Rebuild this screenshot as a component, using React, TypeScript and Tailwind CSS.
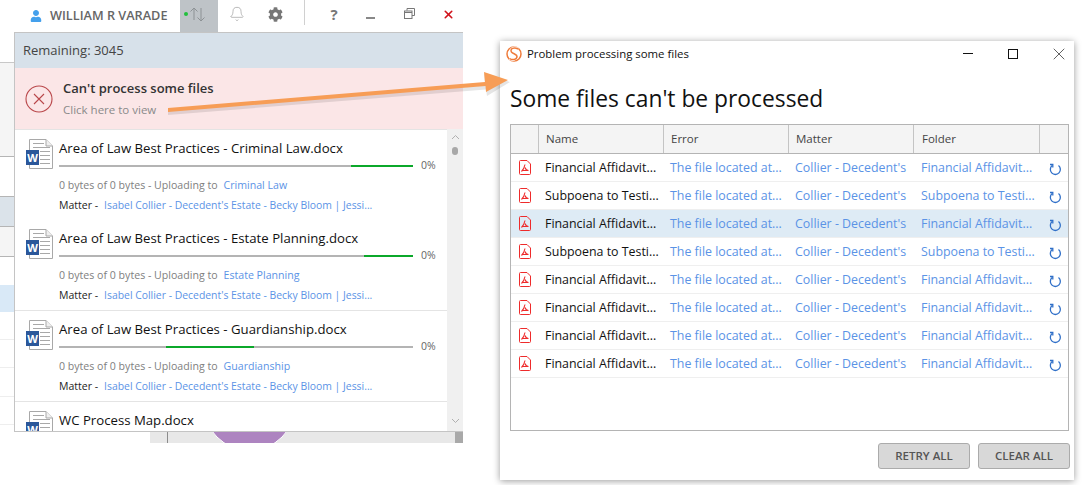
import React from "react";
import { Bell, X } from "lucide-react";
import { FaCog, FaUser } from "react-icons/fa";

const backdropRows = [
  { height: "h-[23px]", className: "bg-white border-b border-[#c8c8c8]" },
  { height: "h-[94px]", className: "bg-[#f5f5f5] border-b border-[#b5b5b5]" },
  { height: "h-[40px]", className: "bg-white border-b border-[#b5b5b5]" },
  { height: "h-[30px]", className: "bg-[#dbe3ea] border-b border-[#b5b5b5]" },
  { height: "h-[30px]", className: "bg-[#f5f5f5] border-b border-[#b5b5b5]" },
  { height: "h-[28px]", className: "bg-white" },
  { height: "h-[27px]", className: "bg-[#d9e9f7]" },
  { height: "h-[28px]", className: "bg-white border-b border-[#eeeeee]" },
  { height: "h-[28px]", className: "bg-white border-b border-[#eeeeee]" },
  { height: "h-[29px]", className: "bg-white border-b border-[#eeeeee]" },
  { height: "h-[28px]", className: "bg-white border-b border-[#eeeeee]" },
];

const uploads = [
  { name: "Area of Law Best Practices - Criminal Law.docx", folder: "Criminal Law", before: "w-[292px]", bar: "w-[62px]", height: "h-[90px]", border: "" },
  { name: "Area of Law Best Practices - Estate Planning.docx", folder: "Estate Planning", before: "w-[305px]", bar: "w-[49px]", height: "h-[91px]", border: "border-b border-[#e4e4e4]" },
  { name: "Area of Law Best Practices - Guardianship.docx", folder: "Guardianship", before: "w-[107px]", bar: "w-[88px]", height: "h-[91px]", border: "border-b border-[#e4e4e4]" },
];

const problemRows = [
  { name: "Financial Affidavit...", folder: "Financial Affidavit...", selected: false },
  { name: "Subpoena to Testi...", folder: "Subpoena to Testi...", selected: false },
  { name: "Financial Affidavit...", folder: "Financial Affidavit...", selected: true },
  { name: "Subpoena to Testi...", folder: "Subpoena to Testi...", selected: false },
  { name: "Financial Affidavit...", folder: "Financial Affidavit...", selected: false },
  { name: "Financial Affidavit...", folder: "Financial Affidavit...", selected: false },
  { name: "Financial Affidavit...", folder: "Financial Affidavit...", selected: false },
  { name: "Financial Affidavit...", folder: "Financial Affidavit...", selected: false },
];

const WordIcon: React.FC = () => (
  <div className="relative w-[27px] h-[30px] shrink-0">
    <svg width="27" height="30" viewBox="0 0 27 30" className="absolute left-0 top-0">
      <path d="M3.5 .5H20L26.5 7V29.5H3.5Z" fill="#fff" stroke="#a8a8a8" />
      <path d="M20 .5V7H26.5" fill="#f0f0f0" stroke="#a8a8a8" />
      <path d="M7 4.5H18M7 8.5H24M14 12.5H24M14 16.5H24M14 20.5H24M14 24.5H24" stroke="#a8a8a8" />
    </svg>
    <div className="absolute left-0 top-[11px] w-[13px] h-[15px] bg-[#2b579a] flex items-center justify-center text-white text-[11px] font-bold leading-none">
      W
    </div>
  </div>
);

const PdfIcon: React.FC = () => (
  <svg width="12" height="15" viewBox="0 0 12 15" fill="none" stroke="#ee2b2b">
    <path d="M1.5 .5H8L11.5 4V13.5A1 1 0 0 1 10.5 14.5H1.5A1 1 0 0 1 .5 13.5V1.5A1 1 0 0 1 1.5 .5Z" />
    <path d="M6 4.5C5.5 7 4.5 9.5 2.5 11.5M6 7.5C6.5 9 8 10.5 9.5 10.5M3.5 10.5H8.5" strokeWidth="1.1" />
  </svg>
);

const RefreshIcon: React.FC = () => (
  <svg width="13" height="13" viewBox="0 0 13 13" fill="none" stroke="#2f6fc8" strokeWidth="1.3">
    <path d="M9.5 2.6A5 5 0 1 1 3.2 2.6" />
    <path d="M1 1.5H3.8V4.6" />
  </svg>
);

const RestoreIcon: React.FC = () => (
  <svg width="11" height="11" viewBox="0 0 11 11" fill="none" stroke="#777">
    <path d="M3 2.5V.5H10.5V7.5H8" />
    <rect x=".5" y="3" width="7.5" height="7.5" />
    <path d="M.5 4.5H8" />
  </svg>
);

const TopBar: React.FC = () => (
  <div className="absolute left-0 top-0 w-[463px] h-[32px] flex items-start bg-white">
    <div className="flex items-center h-[31px] pl-[30px] w-[180px]">
      <FaUser className="text-[#44a0ec] text-[12px]" />
      <span className="ml-[8px] text-[12.7px] font-semibold text-[#666666] whitespace-nowrap">WILLIAM R VARADE</span>
    </div>
    <div className="w-[38px] h-[32px] bg-[#bec3c7] relative flex items-center pl-[9px]">
      <div className="absolute left-[4px] top-[12px] w-[4px] h-[4px] rounded-full bg-[#22c03c]" />
      <svg width="17" height="16" viewBox="0 0 17 16" fill="none" stroke="#8d9295" className="-mt-[5px]">
        <path d="M5 14V2M1.5 5.5L5 2L8.5 5.5M12 2V15M8.5 11.5L12 15L15.5 11.5" />
      </svg>
    </div>
    <div className="w-[38px] h-[28px] flex items-center justify-center">
      <Bell size={16} strokeWidth={1} className="text-[#999999]" />
    </div>
    <div className="w-[38px] h-[28px] flex items-center justify-center">
      <FaCog className="text-[#777777] text-[15px]" />
    </div>
    <div className="ml-[10px] w-px h-[25px] bg-[#d0d0d0]" />
    <div className="ml-[24px] w-[10px] h-[28px] flex items-center justify-center text-[15px] font-bold text-[#777777]">?</div>
    <div className="ml-[27px] w-[9px] h-[2px] mt-[17px] bg-[#888888]" />
    <div className="ml-[29px] h-[27px] flex items-center">
      <RestoreIcon />
    </div>
    <div className="ml-[27px] h-[28px] flex items-center">
      <X size={13} strokeWidth={3} className="text-[#d0121b]" />
    </div>
  </div>
);

const UploadRow: React.FC<(typeof uploads)[number]> = ({ name, folder, before, bar, height, border }) => (
  <div className={`${height} ${border} flex pl-[11px] pt-[9px] shrink-0`}>
    <WordIcon />
    <div className="ml-[6px] flex flex-col w-[377px]">
      <div className="text-[13.2px] leading-[18px] text-[#111111] whitespace-nowrap">{name}</div>
      <div className="flex items-center h-[14px] mt-[2px]">
        <div className="w-[354px] h-[2px] bg-[#b4b4b4] flex">
          <div className={before} />
          <div className={`${bar} h-[2px] bg-[#0ba82a]`} />
        </div>
        <span className="ml-[8px] text-[10.5px] text-[#666666]">0%</span>
      </div>
      <div className="flex items-center mt-[3px] h-[20px] text-[10.6px] whitespace-nowrap">
        <span className="text-[#808080]">0 bytes of 0 bytes - Uploading to</span>
        <span className="ml-[6px] text-[#5b93e6]">{folder}</span>
      </div>
      <div className="flex items-center h-[20px] text-[10.5px] whitespace-nowrap">
        <span className="text-[#222222]">Matter -</span>
        <span className="ml-[6px] text-[10.4px] text-[#5b93e6]">Isabel Collier - Decedent's Estate - Becky Bloom | Jessi...</span>
      </div>
    </div>
  </div>
);

const UploadPanel: React.FC = () => (
  <div className="absolute left-[14px] top-[32px] w-[449px] h-[400px] border-t border-b border-l border-[#c4c4c4] overflow-hidden flex flex-col bg-white">
    <div className="h-[35px] bg-[#d7e1ea] flex items-center pl-[8px] pt-[1px] text-[13px] text-[#444444] shrink-0">Remaining: 3045</div>
    <div className="h-[61px] bg-[#fbe6e7] flex items-center pl-[10px] shrink-0">
      <svg width="28" height="28" viewBox="0 0 28 28" fill="none" stroke="#b9474a" strokeWidth="1.1">
        <circle cx="14" cy="14" r="13" />
        <path d="M9 9L19 19M19 9L9 19" />
      </svg>
      <div className="ml-[10px] flex flex-col">
        <span className="text-[13px] font-semibold text-[#333333] leading-[20px]">Can't process some files</span>
        <span className="mt-[3px] text-[11.5px] text-[#8a8a8a] leading-[18px]">Click here to view</span>
      </div>
    </div>
    <div className="flex flex-1 min-h-0 relative">
      <div className="flex-1 flex flex-col border-t border-[#e4e4e4] overflow-hidden">
        {uploads.map((upload) => (
          <UploadRow key={upload.name} {...upload} />
        ))}
        <div className="flex pl-[11px] pt-[9px]">
          <WordIcon />
          <div className="ml-[6px] text-[13.2px] leading-[18px] text-[#111111] whitespace-nowrap">WC Process Map.docx</div>
        </div>
      </div>
      <div className="w-[16px] bg-[#f0f0f0] shrink-0 flex flex-col items-center">
        <svg width="9" height="6" viewBox="0 0 9 6" fill="none" stroke="#b0b0b0" className="mt-[5px]">
          <path d="M1 5L4.5 1.5L8 5" />
        </svg>
        <div className="mt-[7px] w-[6px] h-[8px] rounded-full bg-[#a8a8a8]" />
        <svg width="9" height="6" viewBox="0 0 9 6" fill="none" stroke="#b0b0b0" className="mt-auto mb-[7px]">
          <path d="M1 1L4.5 4.5L8 1" />
        </svg>
      </div>
    </div>
  </div>
);

const ProblemDialog: React.FC = () => (
  <div className="absolute left-[500px] top-[41px] w-[574px] h-[439px] bg-white shadow-[0_1px_7px_rgba(0,0,0,0.4)] flex flex-col px-[10px]">
    <div className="h-[25px] flex items-center -ml-[4px] shrink-0">
      <svg width="16" height="16" viewBox="0 0 16 16" fill="none" stroke="#ef7b3a" strokeWidth="1.5">
        <circle cx="8" cy="8" r="7" />
        <path d="M12 3C8 .5 3.5 3 5.5 6C7 8 11.5 8 11 11C10.5 13.5 6.5 14.5 3.5 12.5" stroke="#ffffff" strokeWidth="2.6" />
        <path d="M12 3C8 .5 3.5 3 5.5 6C7 8 11.5 8 11 11C10.5 13.5 6.5 14.5 3.5 12.5" />
      </svg>
      <span className="ml-[5px] text-[11.4px] text-[#111111]">Problem processing some files</span>
      <div className="ml-auto flex items-center -mr-[5px]">
        <div className="w-[10px] h-px bg-[#111111]" />
        <div className="ml-[35px] w-[10px] h-[10px] border border-[#111111]" />
        <X size={20} strokeWidth={0.8} className="ml-[31px] text-[#111111]" />
      </div>
    </div>
    <h1 className="mt-[17px] text-[22.8px] leading-[32px] text-[#111111] font-normal whitespace-nowrap shrink-0">Some files can't be processed</h1>
    <div className="mt-[9px] h-[307px] w-[559px] border border-[#b4b4b4] flex flex-col shrink-0">
      <div className="h-[29px] bg-[#f4f4f4] border-b border-[#b4b4b4] flex text-[11.5px] text-[#444444] shrink-0">
        <div className="w-[28px] border-r border-[#c4c4c4]" />
        <div className="w-[125px] border-r border-[#c4c4c4] pl-[7px] flex items-center">Name</div>
        <div className="w-[125px] border-r border-[#c4c4c4] pl-[7px] flex items-center">Error</div>
        <div className="w-[125px] border-r border-[#c4c4c4] pl-[7px] flex items-center">Matter</div>
        <div className="w-[126px] border-r border-[#c4c4c4] pl-[8px] flex items-center">Folder</div>
        <div className="flex-1" />
      </div>
      {problemRows.map((row, i) => (
        <div
          key={i}
          className={`h-[28px] border-b border-[#efefef] flex items-center text-[12.4px] whitespace-nowrap shrink-0 ${row.selected ? "bg-[#deebf5]" : ""}`}
        >
          <div className="w-[28px] pl-[8px] flex items-center"><PdfIcon /></div>
          <div className="w-[125px] pl-[6px] pt-[1px] text-[#111111]">{row.name}</div>
          <div className="w-[125px] pl-[6px] pt-[1px] text-[#5b93e6]">The file located at...</div>
          <div className="w-[125px] pl-[6px] pt-[1px] text-[#5b93e6]">Collier - Decedent's</div>
          <div className="w-[126px] pl-[7px] pt-[1px] text-[#5b93e6]">{row.folder}</div>
          <div className="pl-[9px] pt-[3px] flex items-center"><RefreshIcon /></div>
        </div>
      ))}
    </div>
    <div className="mt-[12px] flex justify-end gap-[8px] -mr-[6px]">
      <button type="button" className="w-[92px] h-[26px] bg-[#d8d8d8] border border-[#ababab] rounded-[3px] text-[11.5px] font-semibold text-[#555555]">RETRY ALL</button>
      <button type="button" className="w-[92px] h-[26px] bg-[#d8d8d8] border border-[#ababab] rounded-[3px] text-[11.5px] font-semibold text-[#555555]">CLEAR ALL</button>
    </div>
  </div>
);

const App: React.FC = () => (
  <div className="relative w-[1086px] h-[485px] overflow-hidden bg-white font-['Open_Sans','Noto_Sans',sans-serif]">
    <div className="absolute left-0 top-[40px] w-[14px] flex flex-col">
      {backdropRows.map((row, i) => (
        <div key={i} className={`${row.height} ${row.className}`} />
      ))}
    </div>

    <div className="absolute left-[150px] top-[432px] w-[313px] h-[11px] bg-[#e8e8e8] flex overflow-hidden">
      <div className="ml-[17px] w-px bg-[#8c8c8c]" />
      <div className="ml-[35px] w-[93px] h-[93px] -mt-[74px] rounded-full bg-[#ad84c0] border border-white shrink-0" />
      <div className="ml-auto w-[8px] bg-[#a9a9a9]" />
    </div>

    <TopBar />
    <UploadPanel />
    <ProblemDialog />

    <svg width="360" height="50" viewBox="0 0 360 50" className="absolute left-[160px] top-[65px]">
      <path d="M8 44L325 18.5L324 7L350 15L327 29L326 22.5L8 48Z" fill="#000" opacity=".1" transform="translate(0 2)" />
      <path d="M8 43L325 17L324 7L348 15L326 27L325.5 21L8 47Z" fill="#f79d56" />
    </svg>
  </div>
);

export default App;
